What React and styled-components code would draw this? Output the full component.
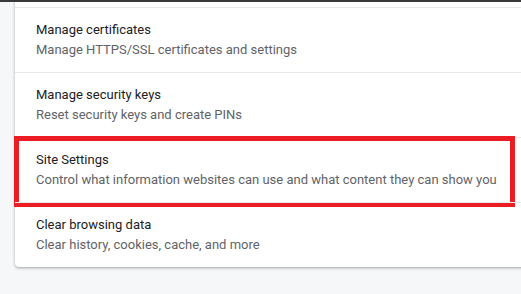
import React from "react";
import styled, { createGlobalStyle } from "styled-components";

const Global = createGlobalStyle`
  html, body { margin: 0; padding: 0; }
  body {
    background: #f6f7f9;
    font-family: Roboto, "Liberation Sans", Arial, sans-serif;
    overflow: hidden;
  }
`;

const Page = styled.div`
  width: 521px;
  height: 294px;
  background: #f6f7f9;
  overflow: hidden;
`;

const TopEdge = styled.div`
  height: 2px;
  background: #3a3a3a;
`;

const Card = styled.div`
  margin-left: 15px;
  width: 540px;
  background: #fff;
  border-radius: 0 0 4px 4px;
  box-shadow: 0 1px 2px rgba(60, 64, 67, 0.3), 0 1px 3px 1px rgba(60, 64, 67, 0.12);
`;

const CutTop = styled.div`
  height: 5px;
`;

const Row = styled.div`
  position: relative;
  height: 64px;
  border-top: 1px solid #e8e9eb;
  padding-left: 21px;
  display: flex;
  flex-direction: column;
  justify-content: center;
`;

const Title = styled.div`
  font-size: 13px;
  line-height: 20px;
  color: #202124;
`;

const Sub = styled.div`
  font-size: 13px;
  line-height: 20px;
  color: #5f6368;
`;

const Highlight = styled.div`
  position: absolute;
  left: -1px;
  top: -2px;
  width: 501px;
  height: 71px;
  box-sizing: border-box;
  border: 5px solid #ec1c24;
  pointer-events: none;
`;

const items = [
  { title: "Manage certificates", sub: "Manage HTTPS/SSL certificates and settings" },
  { title: "Manage security keys", sub: "Reset security keys and create PINs" },
  {
    title: "Site Settings",
    sub: "Control what information websites can use and what content they can show you",
    marked: true,
  },
  { title: "Clear browsing data", sub: "Clear history, cookies, cache, and more" },
];

export default function App() {
  return (
    <Page>
      <Global />
      <TopEdge />
      <Card>
        <CutTop />
        {items.map((it) => (
          <Row key={it.title}>
            <Title>{it.title}</Title>
            <Sub>{it.sub}</Sub>
            {it.marked && <Highlight />}
          </Row>
        ))}
      </Card>
    </Page>
  );
}
